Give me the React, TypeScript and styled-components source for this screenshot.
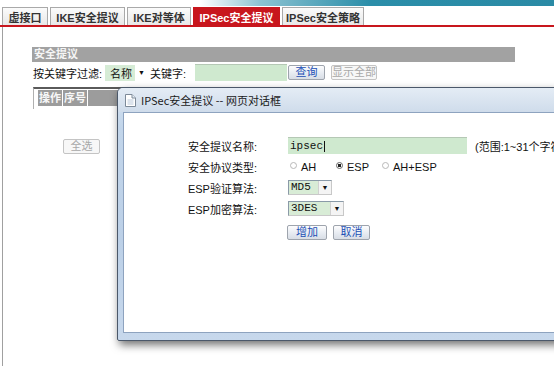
import React from 'react'
import styled, { createGlobalStyle } from 'styled-components'

const GlobalStyle = createGlobalStyle`
  html, body {
    margin: 0;
    padding: 0;
    background: #fff;
    overflow: hidden;
  }
  body {
    font-family: 'Liberation Sans', 'Noto Sans CJK SC', sans-serif;
    font-size: 11px;
    color: #222;
  }
`

const Screen = styled.div`
  position: relative;
  width: 554px;
  height: 366px;
  overflow: hidden;
`

const TopStrip = styled.div`
  height: 6px;
  background: linear-gradient(to right, #fff 0, #fff 200px, #8cc3d2 260px, #2b8ea9 370px, #2a8aa5 100%);
`

const TabBar = styled.div`
  display: flex;
  align-items: flex-end;
  gap: 2px;
  height: 19px;
  padding-left: 2px;
  border-bottom: 2px solid #c8161d;
`

const Tab = styled.div<{ $active?: boolean; $w: number }>`
  width: ${p => p.$w}px;
  height: 18px;
  box-sizing: border-box;
  display: flex;
  align-items: center;
  justify-content: center;
  font-weight: bold;
  font-size: 11px;
  color: ${p => (p.$active ? '#fff' : '#333')};
  background: ${p => (p.$active ? '#c8161d' : 'linear-gradient(#fbfbfb, #e8e8e8)')};
  border: 1px solid ${p => (p.$active ? '#c8161d' : '#a9a9a9')};
  border-bottom: none;
`

const PageBody = styled.div`
  margin-left: 2px;
  height: 339px;
  border-left: 1px solid #a0a0a0;
  padding: 20px 0 0 29px;
  box-sizing: border-box;
`

const Section = styled.div`
  width: 483px;
`

const SectionHeader = styled.div`
  height: 15px;
  line-height: 15px;
  background: #a2a2a2;
  color: #f5f5f5;
  font-weight: bold;
  padding-left: 2px;
`

const FilterRow = styled.div`
  display: flex;
  align-items: center;
  height: 19px;
  margin-top: 1px;
  padding-left: 1px;
`

const Label = styled.span<{ $w: number; $ml?: number }>`
  width: ${p => p.$w}px;
  margin-left: ${p => p.$ml ?? 0}px;
  flex: none;
  white-space: nowrap;
  color: #111;
`

const FilterSelect = styled.div`
  width: 42px;
  height: 16px;
  display: flex;
  align-items: center;
  flex: none;
  background: linear-gradient(to right, #d6ecd6 0, #d6ecd6 30px, #fff 30px);
  box-sizing: border-box;
  padding-left: 5px;
  color: #111;
  font-size: 11px;
`

const Caret = styled.span`
  margin-left: auto;
  margin-right: 2px;
  font-size: 7px;
  color: #111;
`

const GreenInput = styled.div<{ $w: number }>`
  width: ${p => p.$w}px;
  height: 17px;
  box-sizing: border-box;
  flex: none;
  background: #cfe9cf;
  border-top: 1px solid #b5c8b5;
  display: flex;
  align-items: center;
  padding-left: 2px;
  font-family: 'Liberation Mono', 'DejaVu Sans Mono', monospace;
  font-size: 11px;
  color: #111;
`

const Cursor = styled.span`
  display: inline-block;
  width: 1px;
  height: 11px;
  margin-left: 1px;
  background: #111;
`

const Button = styled.button<{ $w: number; $ml?: number; $disabled?: boolean }>`
  width: ${p => p.$w}px;
  height: 15px;
  margin-left: ${p => p.$ml ?? 0}px;
  flex: none;
  padding: 0;
  box-sizing: border-box;
  font-family: 'Liberation Sans', 'Noto Sans CJK SC', sans-serif;
  font-size: 11px;
  line-height: 13px;
  border-radius: 2px;
  border: 1px solid ${p => (p.$disabled ? '#c4c4c4' : '#9ea4ad')};
  color: ${p => (p.$disabled ? '#a8a8a8' : '#1b4fb5')};
  background: ${p => (p.$disabled ? '#f7f7f7' : 'linear-gradient(#fdfdfd, #e9edf3 50%, #d8dde5)')};
`

const TableFrame = styled.div`
  margin-top: 5px;
  margin-left: 1px;
  border-top: 2px solid #5a5a5a;
  border-left: 1px solid #b0b0b0;
  padding: 1px 0 3px 4px;
`

const HeaderRow = styled.div`
  display: flex;
  gap: 1px;
  height: 16px;
`

const HeadCell = styled.div<{ $w?: number }>`
  width: ${p => (p.$w ? `${p.$w}px` : 'auto')};
  flex: ${p => (p.$w ? 'none' : '1')};
  background: #9c9c9c;
  color: #f7f7f7;
  font-weight: bold;
  line-height: 16px;
  padding-left: 1px;
`

const SelectAllRow = styled.div`
  margin-top: 30px;
  padding-left: 31px;
`

/* dialog overlay */

const Dialog = styled.div`
  position: absolute;
  left: 117px;
  top: 87px;
  width: 460px;
  height: 254px;
  box-sizing: border-box;
  border: 1px solid #4b586a;
  border-radius: 6px 6px 2px 2px;
  background: linear-gradient(#d6e3f1, #c2d5ea 40px, #bcd0e7 60%, #c7d8ec);
  box-shadow: 2px 4px 8px rgba(0, 0, 0, 0.55);
  display: flex;
  flex-direction: column;
`

const TitleBar = styled.div`
  height: 24px;
  flex: none;
  display: flex;
  align-items: center;
  padding-left: 7px;
  gap: 5px;
  font-family: 'Noto Sans CJK SC', 'Liberation Sans', sans-serif;
  font-size: 11px;
  color: #1a1a1a;
  background: linear-gradient(#e4ecf5, #cfdceb);
  border-radius: 5px 5px 0 0;
`

const DialogBody = styled.div`
  flex: 1;
  margin: 0 6px 7px 5px;
  background: #fff;
  border: 1px solid #8ea3bf;
  padding: 22px 0 0 63px;
  box-sizing: border-box;
`

const Form = styled.div`
  display: grid;
  grid-template-columns: 70px auto;
  grid-auto-rows: 21px;
  column-gap: 31px;
  align-items: center;
`

const FormLabel = styled.div`
  text-align: right;
  white-space: nowrap;
  color: #111;
  font-size: 11px;
`

const Field = styled.div`
  display: flex;
  align-items: center;
  white-space: nowrap;
`

const Hint = styled.span`
  margin-left: 8px;
  color: #111;
`

const RadioItem = styled.label<{ $w?: number }>`
  display: flex;
  align-items: center;
  width: ${p => (p.$w ? `${p.$w}px` : 'auto')};
  gap: 4px;
  color: #111;
`

const RadioDot = styled.span<{ $checked?: boolean }>`
  width: 7px;
  height: 7px;
  margin-left: 2px;
  margin-top: -2px;
  border-radius: 50%;
  box-sizing: border-box;
  border: 1px solid ${p => (p.$checked ? '#666' : '#b8b8b8')};
  background: ${p => (p.$checked ? 'radial-gradient(circle, #222 0 1.6px, #fff 1.8px)' : '#fff')};
`

const SmallSelect = styled.div<{ $w: number }>`
  width: ${p => p.$w}px;
  height: 15px;
  box-sizing: border-box;
  display: flex;
  border: 1px solid #8a9aa8;
  border-right-color: #c8c8c8;
  border-bottom-color: #c8c8c8;
  background: #d8ecd6;
`

const SelectText = styled.span`
  flex: 1;
  padding-left: 2px;
  font-family: 'Liberation Mono', 'DejaVu Sans Mono', monospace;
  font-size: 11px;
  line-height: 13px;
  color: #111;
`

const SelectArrow = styled.span`
  width: 12px;
  background: #f4f4f4;
  border-left: 1px solid #d0d0d0;
  display: flex;
  align-items: center;
  justify-content: center;
  font-size: 7px;
  color: #111;
`

const ButtonRow = styled.div`
  display: flex;
  gap: 6px;
  margin-top: 6px;
  margin-left: 100px;
`

const DocIcon = () => (
  <svg width="11" height="13" viewBox="0 0 11 13">
    <path d="M0.5 0.5 H7 L10.5 4 V12.5 H0.5 Z" fill="#fff" stroke="#7d8a99" />
    <path d="M7 0.5 V4 H10.5" fill="#e8eef5" stroke="#7d8a99" />
    <path d="M2.5 6 H8.5 M2.5 8 H8.5 M2.5 10 H8.5" stroke="#b9c8da" />
  </svg>
)

const tabs = [
  { label: '虚接口', w: 46 },
  { label: 'IKE安全提议', w: 75 },
  { label: 'IKE对等体', w: 64 },
  { label: 'IPSec安全提议', w: 87, active: true },
  { label: 'IPSec安全策略', w: 82 },
]

export default function App() {
  return (
    <Screen>
      <GlobalStyle />
      <TopStrip />
      <TabBar>
        {tabs.map(t => (
          <Tab key={t.label} $w={t.w} $active={t.active}>
            {t.label}
          </Tab>
        ))}
      </TabBar>

      <PageBody>
        <Section>
          <SectionHeader>安全提议</SectionHeader>
          <FilterRow>
            <Label $w={72}>按关键字过滤:</Label>
            <FilterSelect>
              名称
              <Caret>▼</Caret>
            </FilterSelect>
            <Label $w={45} $ml={3}>关键字:</Label>
            <GreenInput $w={92} />
            <Button $w={37} $ml={1}>查询</Button>
            <Button $w={46} $ml={6} $disabled>显示全部</Button>
          </FilterRow>
          <TableFrame>
            <HeaderRow>
              <HeadCell $w={23}>操作</HeadCell>
              <HeadCell $w={23}>序号</HeadCell>
              <HeadCell />
            </HeaderRow>
          </TableFrame>
          <SelectAllRow>
            <Button $w={37} $disabled>全选</Button>
          </SelectAllRow>
        </Section>
      </PageBody>

      <Dialog>
        <TitleBar>
          <DocIcon />
          IPSec安全提议 -- 网页对话框
        </TitleBar>
        <DialogBody>
          <Form>
            <FormLabel>安全提议名称:</FormLabel>
            <Field>
              <GreenInput $w={179}>
                ipsec
                <Cursor />
              </GreenInput>
              <Hint>(范围:1~31个字符)</Hint>
            </Field>

            <FormLabel>安全协议类型:</FormLabel>
            <Field>
              <RadioItem $w={46}>
                <RadioDot />
                AH
              </RadioItem>
              <RadioItem $w={46}>
                <RadioDot $checked />
                ESP
              </RadioItem>
              <RadioItem>
                <RadioDot />
                AH+ESP
              </RadioItem>
            </Field>

            <FormLabel>ESP验证算法:</FormLabel>
            <Field>
              <SmallSelect $w={44}>
                <SelectText>MD5</SelectText>
                <SelectArrow>▼</SelectArrow>
              </SmallSelect>
            </Field>

            <FormLabel>ESP加密算法:</FormLabel>
            <Field>
              <SmallSelect $w={56}>
                <SelectText>3DES</SelectText>
                <SelectArrow>▼</SelectArrow>
              </SmallSelect>
            </Field>
          </Form>
          <ButtonRow>
            <Button $w={40}>增加</Button>
            <Button $w={37}>取消</Button>
          </ButtonRow>
        </DialogBody>
      </Dialog>
    </Screen>
  )
}
